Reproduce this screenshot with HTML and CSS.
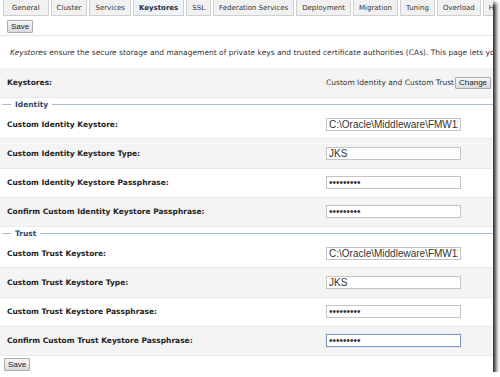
FILE: index.html
```html
<!DOCTYPE html>
<html lang="en">
<head>
  <meta charset="UTF-8">
  <title>Keystores</title>
  <link rel="stylesheet" href="styles.css">
</head>
<body>
  <div class="shot">
    <ul class="tabs">
      <li class="first">General</li>
      <li>Cluster</li>
      <li>Services</li>
      <li class="active">Keystores</li>
      <li>SSL</li>
      <li>Federation Services</li>
      <li>Deployment</li>
      <li>Migration</li>
      <li>Tuning</li>
      <li>Overload</li>
      <li>Health Monitoring</li>
    </ul>

    <div class="toolbar">
      <button class="btn">Save</button>
    </div>

    <p class="intro"><em>Keystores</em> ensure the secure storage and management of private keys and trusted certificate authorities (CAs). This page lets you view and define various keystore configurations.</p>

    <div class="row shaded tall">
      <label>Keystores:</label>
      <div class="value">Custom Identity and Custom Trust<button class="btn small">Change</button></div>
    </div>

    <div class="legend"><span>Identity</span></div>
    <div class="row">
      <label>Custom Identity Keystore:</label>
      <div class="value"><input type="text" value="C:\Oracle\Middleware\FMW11g\wlserver_10.3\server\lib\identity.jks"></div>
    </div>
    <div class="row shaded">
      <label>Custom Identity Keystore Type:</label>
      <div class="value"><input type="text" value="JKS"></div>
    </div>
    <div class="row">
      <label>Custom Identity Keystore Passphrase:</label>
      <div class="value"><input type="password" value="password1"></div>
    </div>
    <div class="row shaded">
      <label>Confirm Custom Identity Keystore Passphrase:</label>
      <div class="value"><input type="password" value="password1"></div>
    </div>

    <div class="legend"><span>Trust</span></div>
    <div class="row">
      <label>Custom Trust Keystore:</label>
      <div class="value"><input type="text" value="C:\Oracle\Middleware\FMW11g\wlserver_10.3\server\lib\trust.jks"></div>
    </div>
    <div class="row shaded">
      <label>Custom Trust Keystore Type:</label>
      <div class="value"><input type="text" value="JKS"></div>
    </div>
    <div class="row">
      <label>Custom Trust Keystore Passphrase:</label>
      <div class="value"><input type="password" value="password1"></div>
    </div>
    <div class="row shaded">
      <label>Confirm Custom Trust Keystore Passphrase:</label>
      <div class="value"><input type="password" class="focused" value="password1"></div>
    </div>

    <div class="footer">
      <button class="btn">Save</button>
    </div>
  </div>
</body>
</html>
```

FILE: styles.css
```css
body {
  margin: 0;
  background: #fff;
  font-family: "DejaVu Sans", Verdana, sans-serif;
  font-size: 7.5px;
  color: #222;
}

.shot {
  width: 493px;
  height: 372px;
  overflow: hidden;
  background: #fff;
  box-shadow: 3px 3px 4px rgba(0, 0, 0, 0.85);
}

.tabs {
  display: flex;
  gap: 2px;
  margin: 0;
  padding: 0 0 0 3px;
  list-style: none;
  height: 16px;
  font-size: 7px;
  white-space: nowrap;
}

.tabs li {
  flex: none;
  padding: 0 5px;
  line-height: 16px;
  background: #f1f1f1;
  border: 1px solid #cfcfcf;
  border-top: none;
  color: #333;
}

.tabs li.first {
  padding: 0 8px;
}

.tabs li.active {
  background: #eef3f8;
  font-weight: bold;
  color: #1d2f45;
}

.toolbar {
  padding: 4px 7px 0;
  height: 15px;
  border-bottom: 1px solid #e3e3e3;
}

.btn {
  font-family: "Liberation Sans", Arial, sans-serif;
  font-size: 8px;
  height: 13px;
  padding: 0 3px;
  color: #222;
  background: linear-gradient(#f6f6f6, #dadada);
  border: 1px solid #a9a9a9;
  border-radius: 1px;
}

.btn.small {
  margin-left: 1px;
  height: 12px;
}

.intro {
  margin: 12px 0 0 10px;
  height: 20px;
  white-space: nowrap;
  color: #333;
}

.row {
  display: flex;
  align-items: center;
  height: 28.25px;
  border-bottom: 1px solid #e9e9e9;
}

.row.tall {
  height: 29px;
}

.row.shaded {
  background: #f4f4f4;
}

.row label {
  width: 319px;
  padding-left: 7px;
  font-weight: bold;
  color: #222;
}

.value {
  display: flex;
  align-items: center;
  white-space: nowrap;
  color: #333;
}

.value input {
  width: 129px;
  height: 11px;
  padding: 0 2px;
  margin: 0;
  font-family: "Liberation Sans", Arial, sans-serif;
  font-size: 10px;
  color: #333;
  background: #fff;
  border: 1px solid #c4c4c4;
  outline: none;
}

.value input.focused {
  border-color: #7a9cc6;
  box-shadow: 0 0 1px #9bb8dc;
}

.legend {
  display: flex;
  align-items: center;
  height: 12px;
  padding-left: 2px;
}

.legend::before,
.legend::after {
  content: "";
  height: 1px;
  background: #a9bccf;
}

.legend::before {
  width: 9px;
}

.legend::after {
  flex: 1;
}

.legend span {
  padding: 0 4px;
  font-weight: bold;
  color: #2b4a6c;
}

.footer {
  padding: 2px 4px 0;
}
```
